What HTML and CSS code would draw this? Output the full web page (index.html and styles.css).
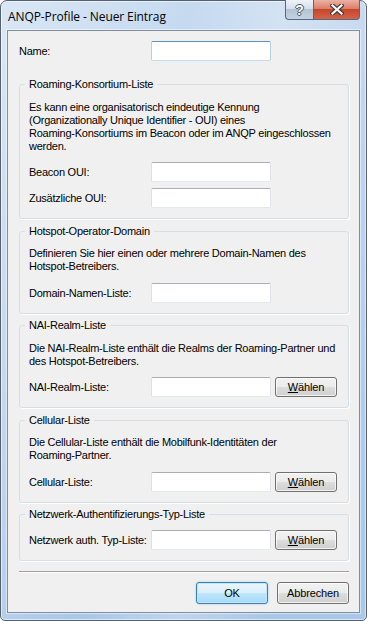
FILE: index.html
```html
<!DOCTYPE html>
<html>
<head>
    <meta charset="UTF-8">
    <title>ANQP-Profile - Neuer Eintrag</title>
    <link rel="stylesheet" href="styles.css">
</head>
<body>
    <div class="window">
        <div class="titlebar">
            <span class="title">ANQP-Profile - Neuer Eintrag</span>
            <div class="caption-buttons">
                <span class="cb help">?</span>
                <span class="cb close">
                    <svg width="14" height="11" viewBox="0 0 14 11">
                        <path d="M2.5 1.5 L11.5 9.5 M11.5 1.5 L2.5 9.5" stroke="#3a3a3a" stroke-width="4.4" stroke-linecap="square" fill="none"/>
                        <path d="M2.5 1.5 L11.5 9.5 M11.5 1.5 L2.5 9.5" stroke="#ffffff" stroke-width="2.2" stroke-linecap="square" fill="none"/>
                    </svg>
                </span>
            </div>
        </div>

        <div class="client">
            <div class="row name-row">
                <label class="lbl wide">Name:</label>
                <input class="field focus" type="text">
            </div>

            <fieldset class="group">
                <legend>Roaming-Konsortium-Liste</legend>
                <p class="info">Es kann eine organisatorisch eindeutige Kennung<br>(Organizationally Unique Identifier - OUI) eines<br>Roaming-Konsortiums im Beacon oder im ANQP eingeschlossen<br>werden.</p>
                <div class="row">
                    <label class="lbl">Beacon OUI:</label>
                    <input class="field" type="text">
                </div>
                <div class="row">
                    <label class="lbl">Zusätzliche OUI:</label>
                    <input class="field" type="text">
                </div>
            </fieldset>

            <fieldset class="group">
                <legend>Hotspot-Operator-Domain</legend>
                <p class="info">Definieren Sie hier einen oder mehrere Domain-Namen des<br>Hotspot-Betreibers.</p>
                <div class="row">
                    <label class="lbl">Domain-Namen-Liste:</label>
                    <input class="field" type="text">
                </div>
            </fieldset>

            <fieldset class="group">
                <legend>NAI-Realm-Liste</legend>
                <p class="info">Die NAI-Realm-Liste enthält die Realms der Roaming-Partner und<br>des Hotspot-Betreibers.</p>
                <div class="row">
                    <label class="lbl">NAI-Realm-Liste:</label>
                    <input class="field" type="text">
                    <button class="btn pick"><u>W</u>ählen</button>
                </div>
            </fieldset>

            <fieldset class="group">
                <legend>Cellular-Liste</legend>
                <p class="info">Die Cellular-Liste enthält die Mobilfunk-Identitäten der<br>Roaming-Partner.</p>
                <div class="row">
                    <label class="lbl">Cellular-Liste:</label>
                    <input class="field" type="text">
                    <button class="btn pick"><u>W</u>ählen</button>
                </div>
            </fieldset>

            <fieldset class="group">
                <legend>Netzwerk-Authentifizierungs-Typ-Liste</legend>
                <div class="row">
                    <label class="lbl">Netzwerk auth. Typ-Liste:</label>
                    <input class="field" type="text">
                    <button class="btn pick"><u>W</u>ählen</button>
                </div>
            </fieldset>

            <hr class="sep">

            <div class="actions">
                <button class="btn default">OK</button>
                <button class="btn">Abbrechen</button>
            </div>
        </div>
    </div>
</body>
</html>
```

FILE: styles.css
```css
html, body {
    margin: 0;
    padding: 0;
    background: #ffffff;
}

body {
    font-family: "Liberation Sans", Arial, sans-serif;
    font-size: 11px;
    letter-spacing: -0.25px;
    color: #000;
}

.window {
    box-sizing: border-box;
    width: 367px;
    height: 621px;
    border: 1px solid #55616e;
    border-radius: 7px 7px 5px 5px;
    background:
        linear-gradient(100deg, rgba(255,255,255,0.35) 0%, rgba(255,255,255,0) 40%, rgba(255,255,255,0.25) 60%, rgba(255,255,255,0) 80%),
        linear-gradient(to bottom, #c6daf0 0%, #b9d1ec 40%, #a9c7e8 100%);
    box-shadow: inset 0 0 0 1px rgba(255,255,255,0.55);
    display: flex;
    flex-direction: column;
}

.titlebar {
    height: 29px;
    position: relative;
    display: flex;
    align-items: center;
}

.title {
    font-family: "Open Sans", "Liberation Sans", sans-serif;
    font-size: 12px;
    letter-spacing: -0.1px;
    padding: 0 0 0 7px;
    margin-top: 1px;
    color: #000;
}

.caption-buttons {
    position: absolute;
    top: -1px;
    right: 6px;
    display: flex;
}

.cb {
    box-sizing: border-box;
    height: 20px;
    display: flex;
    align-items: center;
    justify-content: center;
    border: 1px solid #5a6776;
    border-top: none;
}

.help {
    width: 28px;
    border-radius: 0 0 0 4px;
    border-right: none;
    background: linear-gradient(to bottom, #eef3f8 0%, #d6e0eb 45%, #b3c3d5 50%, #c4d3e3 100%);
    color: #fff;
    font-family: "Liberation Sans", sans-serif;
    font-weight: bold;
    font-size: 14px;
    text-shadow: 1px 0 0 #4a5564, -1px 0 0 #4a5564, 0 1px 0 #4a5564, 0 -1px 0 #4a5564;
}

.close {
    width: 47px;
    border-radius: 0 0 4px 0;
    background: linear-gradient(to bottom, #eab2a5 0%, #dc7f69 45%, #c8452b 50%, #d2654a 100%);
}

.client {
    flex: 1;
    margin: 0 6px 7px 6px;
    border: 1px solid #7f8e9e;
    background: #f0f0f0;
    padding: 10px 10px 0 11px;
    box-shadow: 0 0 0 1px rgba(255,255,255,0.5);
}

.row {
    display: flex;
    align-items: center;
    height: 20px;
}

.row + .row {
    margin-top: 6px;
}

.lbl {
    width: 122px;
    flex: none;
    white-space: nowrap;
}

.lbl.wide {
    width: 132px;
}

.field {
    box-sizing: border-box;
    width: 120px;
    height: 20px;
    margin: 0;
    padding: 0 2px;
    background: #fff;
    border: 1px solid;
    border-color: #abadb3 #e2e3ea #e3e9ef #dbdfe6;
    border-radius: 2px;
    font: inherit;
    outline: none;
}

.field.focus {
    border-color: #5d92c4 #b4cfe8 #c5dbef #b4cfe8;
}

.group {
    margin: 5.5px 0 0 0;
    padding: 0 9px 10px 9px;
    border: 1px solid #d5dfe5;
    border-radius: 3px;
    box-shadow: 1px 1px 0 #fff;
    min-width: 0;
}

.name-row + .group {
    margin-top: 17px;
}

.group legend {
    padding: 0 4px;
    margin-left: -4px;
    line-height: 13px;
}

.group legend + .row {
    margin-top: 9px;
}

.info {
    margin: 9.5px 0 9.5px 0;
    line-height: 13px;
    white-space: nowrap;
}

.btn {
    box-sizing: border-box;
    height: 20px;
    margin: 0;
    padding: 0;
    border: 1px solid #707070;
    border-radius: 3px;
    background: linear-gradient(to bottom, #f2f2f2 0%, #ebebeb 50%, #dddddd 50%, #cfcfcf 100%);
    box-shadow: inset 0 0 0 1px rgba(255,255,255,0.7);
    font: inherit;
    letter-spacing: -0.15px;
    color: #000;
}

.btn u {
    text-underline-offset: 1px;
}

.pick {
    width: 62px;
    margin-left: 4px;
}

.sep {
    margin: 10px 0 0 0;
    border: none;
    border-top: 1px solid #a0a0a0;
    border-bottom: 1px solid #fff;
    height: 0;
}

.actions {
    display: flex;
    justify-content: flex-end;
    gap: 9px;
    margin-top: 9px;
}

.actions .btn {
    width: 72px;
    height: 22px;
}

.btn.default {
    border-color: #3c7fb1;
    background: linear-gradient(to bottom, #eaf6fd 0%, #d9f0fc 50%, #bee6fd 50%, #a7d9f5 100%);
    box-shadow: inset 0 0 0 1px #c6e6f8, 0 0 2px #8fc8ec;
}
```
